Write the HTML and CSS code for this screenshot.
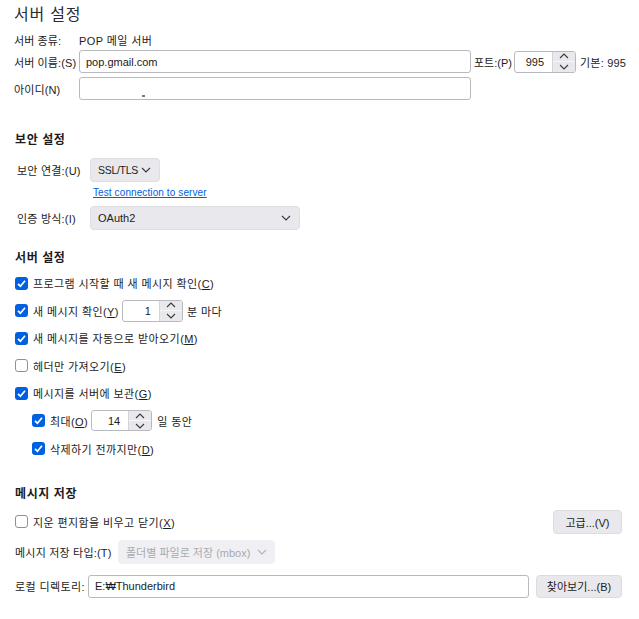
FILE: index.html
```html
<!DOCTYPE html>
<html lang="ko">
<head>
<meta charset="utf-8">
<title>서버 설정</title>
<link rel="stylesheet" href="styles.css">
</head>
<body>
<div class="page">
  <div class="title">서버 설정</div>

  <div class="row r-kind">
    <span class="lbl-top">서버 종류:</span>
    <span>POP 메일 서버</span>
  </div>

  <div class="row r-name">
    <span class="lbl-top">서버 이름:(S)</span>
    <div class="field f-host">pop.gmail.com</div>
    <span class="port-lbl">포트:(P)</span>
    <div class="spin s-port">
      <div class="spin-val">995</div>
      <div class="spin-btns">
        <div class="spin-btn"><svg width="10" height="6" viewBox="0 0 10 6"><path d="M1 5 L5 1 L9 5" fill="none" stroke="#3a3a3a" stroke-width="1.1"/></svg></div>
        <div class="spin-btn"><svg width="10" height="6" viewBox="0 0 10 6"><path d="M1 1 L5 5 L9 1" fill="none" stroke="#3a3a3a" stroke-width="1.1"/></svg></div>
      </div>
    </div>
    <span class="port-def">기본: 995</span>
  </div>

  <div class="row r-id">
    <span class="lbl-top">아이디(N)</span>
    <div class="field f-host"><span class="blot"></span></div>
  </div>

  <div class="heading h-sec">보안 설정</div>

  <div class="row r-ssl">
    <span class="lbl-sec">보안 연결:(U)</span>
    <div class="select sel-ssl">
      <span class="narrow">SSL/TLS</span>
      <svg width="10" height="6" viewBox="0 0 10 6"><path d="M1 1 L5 5 L9 1" fill="none" stroke="#3a3a3a" stroke-width="1.1"/></svg>
    </div>
  </div>

  <div class="link-row"><span class="link">Test connection to server</span></div>

  <div class="row r-auth">
    <span class="lbl-sec">인증 방식:(I)</span>
    <div class="select sel-auth">
      <span>OAuth2</span>
      <svg width="10" height="6" viewBox="0 0 10 6"><path d="M1 1 L5 5 L9 1" fill="none" stroke="#3a3a3a" stroke-width="1.1"/></svg>
    </div>
  </div>

  <div class="heading h-srv">서버 설정</div>

  <div class="checks">
    <div class="crow">
      <span class="cb on"><svg width="13" height="13" viewBox="0 0 13 13"><path d="M3 6.8 L5.4 9.2 L10 3.8" fill="none" stroke="#fff" stroke-width="1.7"/></svg></span>
      <span>프로그램 시작할 때 새 메시지 확인(<u>C</u>)</span>
    </div>
    <div class="crow">
      <span class="cb on"><svg width="13" height="13" viewBox="0 0 13 13"><path d="M3 6.8 L5.4 9.2 L10 3.8" fill="none" stroke="#fff" stroke-width="1.7"/></svg></span>
      <span>새 메시지 확인(<u>Y</u>)</span>
      <div class="spin s-min">
        <div class="spin-val">1</div>
        <div class="spin-btns">
          <div class="spin-btn"><svg width="10" height="6" viewBox="0 0 10 6"><path d="M1 5 L5 1 L9 5" fill="none" stroke="#3a3a3a" stroke-width="1.1"/></svg></div>
          <div class="spin-btn"><svg width="10" height="6" viewBox="0 0 10 6"><path d="M1 1 L5 5 L9 1" fill="none" stroke="#3a3a3a" stroke-width="1.1"/></svg></div>
        </div>
      </div>
      <span>분 마다</span>
    </div>
    <div class="crow">
      <span class="cb on"><svg width="13" height="13" viewBox="0 0 13 13"><path d="M3 6.8 L5.4 9.2 L10 3.8" fill="none" stroke="#fff" stroke-width="1.7"/></svg></span>
      <span>새 메시지를 자동으로 받아오기(<u>M</u>)</span>
    </div>
    <div class="crow">
      <span class="cb"></span>
      <span>헤더만 가져오기(<u>E</u>)</span>
    </div>
    <div class="crow">
      <span class="cb on"><svg width="13" height="13" viewBox="0 0 13 13"><path d="M3 6.8 L5.4 9.2 L10 3.8" fill="none" stroke="#fff" stroke-width="1.7"/></svg></span>
      <span>메시지를 서버에 보관(<u>G</u>)</span>
    </div>
    <div class="crow indent">
      <span class="cb on"><svg width="13" height="13" viewBox="0 0 13 13"><path d="M3 6.8 L5.4 9.2 L10 3.8" fill="none" stroke="#fff" stroke-width="1.7"/></svg></span>
      <span>최대(<u>O</u>)</span>
      <div class="spin s-days">
        <div class="spin-val">14</div>
        <div class="spin-btns">
          <div class="spin-btn"><svg width="10" height="6" viewBox="0 0 10 6"><path d="M1 5 L5 1 L9 5" fill="none" stroke="#3a3a3a" stroke-width="1.1"/></svg></div>
          <div class="spin-btn"><svg width="10" height="6" viewBox="0 0 10 6"><path d="M1 1 L5 5 L9 1" fill="none" stroke="#3a3a3a" stroke-width="1.1"/></svg></div>
        </div>
      </div>
      <span>일 동안</span>
    </div>
    <div class="crow indent">
      <span class="cb on"><svg width="13" height="13" viewBox="0 0 13 13"><path d="M3 6.8 L5.4 9.2 L10 3.8" fill="none" stroke="#fff" stroke-width="1.7"/></svg></span>
      <span>삭제하기 전까지만(<u>D</u>)</span>
    </div>
  </div>

  <div class="heading h-store">메시지 저장</div>

  <div class="row r-empty">
    <div class="crow-inline">
      <span class="cb"></span>
      <span>지운 편지함을 비우고 닫기(<u>X</u>)</span>
    </div>
    <div class="btn b-adv">고급...(V)</div>
  </div>

  <div class="row r-type">
    <span class="lbl-type">메시지 저장 타입:(T)</span>
    <div class="select sel-type disabled">
      <span>폴더별 파일로 저장 (mbox)</span>
      <svg width="10" height="6" viewBox="0 0 10 6"><path d="M1 1 L5 5 L9 1" fill="none" stroke="#b5b5b5" stroke-width="1.1"/></svg>
    </div>
  </div>

  <div class="row r-local">
    <span class="lbl-local">로컬 디렉토리:</span>
    <div class="field f-local">E:₩Thunderbird</div>
    <div class="btn b-browse">찾아보기...(B)</div>
  </div>
</div>
</body>
</html>
```

FILE: styles.css
```css
html, body {
  margin: 0;
  padding: 0;
  background: #ffffff;
}

body {
  font-family: "Liberation Sans", "Noto Sans CJK KR", sans-serif;
  font-size: 11px;
  letter-spacing: 0.4px;
  color: #1c1b22;
}

.page {
  width: 608px;
  padding: 3px 17px 0 14px;
  display: flex;
  flex-direction: column;
}

u {
  text-decoration: underline;
  text-underline-offset: 1px;
}

.title {
  font-size: 16px;
  letter-spacing: 0.8px;
  line-height: 24px;
  height: 24px;
  color: #2b2a33;
}

.row {
  display: flex;
  align-items: center;
  white-space: nowrap;
}

.row > * { flex: none; }

.r-kind { height: 16px; margin-top: 5px; }
.r-name { height: 23px; margin-top: 2px; }
.r-id { height: 23px; margin-top: 4px; }

.lbl-top {
  width: 65px;
  letter-spacing: 0.1px;
}

.field {
  box-sizing: border-box;
  height: 23px;
  border: 1px solid #b9b9c0;
  border-radius: 3px;
  background: #fff;
  display: flex;
  align-items: center;
  padding-left: 6px;
  letter-spacing: 0;
}

.f-host { width: 392px; }

.blot {
  display: inline-block;
  width: 3px;
  height: 2px;
  background: #7a7a7a;
  margin-left: 56px;
  margin-top: 14px;
}

.port-lbl { margin-left: 3px; width: 40px; letter-spacing: 0; }

.spin {
  box-sizing: border-box;
  height: 22px;
  border: 1px solid #b9b9c0;
  border-radius: 3px;
  display: flex;
  background: #fff;
  overflow: hidden;
  flex: none;
}

.spin-val {
  flex: 1;
  display: flex;
  align-items: center;
  justify-content: flex-end;
  padding-right: 8px;
  letter-spacing: 0;
}

.spin-btns {
  width: 22px;
  display: flex;
  flex-direction: column;
  border-left: 1px solid #d4d4d8;
}

.spin-btn {
  flex: 1;
  background: #e9e9ed;
  display: flex;
  align-items: center;
  justify-content: center;
}

.spin-btn + .spin-btn { border-top: 1px solid #f7f7f9; }

.s-port { width: 62px; }
.port-def { margin-left: 4px; letter-spacing: 0.2px; }

.heading {
  font-size: 12px;
  font-weight: bold;
  height: 18px;
  line-height: 18px;
  margin-left: 1px;
  letter-spacing: 0.6px;
}

.h-sec { margin-top: 31px; }
.h-srv { margin-top: 19px; }
.h-store { margin-top: 25px; }

.lbl-sec {
  width: 73px;
  padding-left: 3px;
  letter-spacing: 0.2px;
}

.r-ssl { height: 24px; margin-top: 9px; }
.r-auth { height: 24px; margin-top: 7px; }

.select {
  box-sizing: border-box;
  height: 24px;
  background: #e9e9ed;
  border: 1px solid #dedee2;
  border-radius: 4px;
  display: flex;
  align-items: center;
  justify-content: space-between;
  padding: 0 8px 0 7px;
  letter-spacing: 0;
}

.narrow { font-size: 10.5px; letter-spacing: -0.3px; }

.sel-ssl { width: 70px; }
.sel-auth { width: 210px; }

.link-row {
  height: 14px;
  line-height: 14px;
  margin-top: 3px;
  padding-left: 79px;
}

.link {
  color: #0061e0;
  text-decoration: underline;
  font-size: 10px;
  letter-spacing: 0.1px;
}

.checks {
  display: flex;
  flex-direction: column;
  margin-top: 5px;
  gap: 5.6px;
}

.crow, .crow-inline {
  display: flex;
  align-items: center;
  height: 22px;
  white-space: nowrap;
}

.crow.indent { padding-left: 17px; }

.cb {
  box-sizing: border-box;
  width: 13px;
  height: 13px;
  margin-left: 1px;
  margin-right: 5px;
  border: 1px solid #8f8f9d;
  border-radius: 3px;
  background: #fff;
  display: flex;
  flex: none;
}

.cb.on {
  border: none;
  background: #0061e0;
}

.s-min { width: 61px; margin: 0 4px 0 3px; }
.s-days { width: 61px; margin: 0 5px 0 3px; height: 21px; }

.r-empty {
  height: 24px;
  margin-top: 7px;
  justify-content: space-between;
}

.btn {
  box-sizing: border-box;
  height: 24px;
  background: #e9e9ed;
  border: 1px solid #dcdce0;
  border-radius: 4px;
  display: flex;
  align-items: center;
  justify-content: center;
  letter-spacing: 0;
}

.b-adv { width: 69px; }
.b-browse { width: 86px; margin-left: 7px; height: 23px; }

.r-type { height: 24px; margin-top: 6px; }

.lbl-type {
  width: 103px;
  padding-left: 1px;
  letter-spacing: 0.2px;
}

.sel-type {
  width: 157px;
  padding-right: 7px;
}

.disabled {
  background: #f0f0f4;
  border-color: #f0f0f4;
  color: #a9a9ae;
}

.r-local { height: 23px; margin-top: 11px; }

.lbl-local {
  width: 73px;
  padding-left: 1px;
}

.r-local .f-local { flex: 1; }
```
